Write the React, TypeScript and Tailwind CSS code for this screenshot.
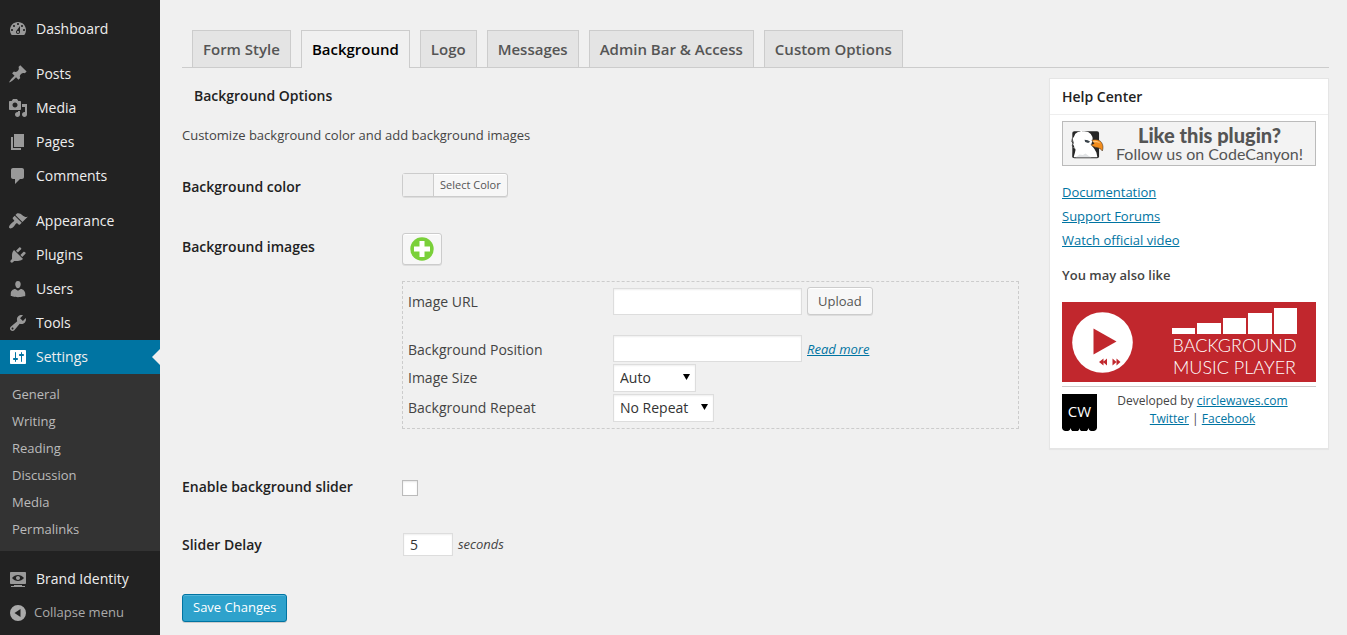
import React from "react";

const menuIcons = {
  dashboard:
    "M3.76 16h12.48c1.1-1.37 1.76-3.11 1.76-5 0-4.42-3.58-8-8-8s-8 3.58-8 8c0 1.89.66 3.63 1.76 5zM10 4c.55 0 1 .45 1 1s-.45 1-1 1-1-.45-1-1 .45-1 1-1zM6 6c.55 0 1 .45 1 1s-.45 1-1 1-1-.45-1-1 .45-1 1-1zm8 0c.55 0 1 .45 1 1s-.45 1-1 1-1-.45-1-1 .45-1 1-1zm-5.37 5.55L12 7v6c0 1.1-.9 2-2 2s-2-.9-2-2c0-.57.24-1.08.63-1.45zM4 10c.55 0 1 .45 1 1s-.45 1-1 1-1-.45-1-1 .45-1 1-1zm12 0c.55 0 1 .45 1 1s-.45 1-1 1-1-.45-1-1 .45-1 1-1zm-5 3c0-.55-.45-1-1-1s-1 .45-1 1 .45 1 1 1 1-.45 1-1z",
  posts:
    "M10.44 3.02l1.82-1.82 6.36 6.35-1.83 1.82c-1.05-.68-2.48-.57-3.41.36l-.75.75c-.92.93-1.04 2.35-.35 3.41l-1.83 1.82-2.41-2.41-2.8 2.79c-.42.42-3.38 2.71-3.8 2.29s1.86-3.39 2.28-3.81l2.79-2.79L4.1 9.36l1.83-1.82c1.05.69 2.48.57 3.4-.36l.75-.75c.93-.92 1.05-2.35.36-3.41z",
  media:
    "M13 11V4c0-.55-.45-1-1-1h-1.67L9 1H5L3.67 3H2c-.55 0-1 .45-1 1v7c0 .55.45 1 1 1h10c.55 0 1-.45 1-1zM7 4.5c1.38 0 2.5 1.12 2.5 2.5S8.38 9.5 7 9.5 4.5 8.38 4.5 7 5.62 4.5 7 4.5zM14 6h5v10.5c0 1.38-1.12 2.5-2.5 2.5S14 17.88 14 16.5s1.12-2.5 2.5-2.5c.17 0 .34.02.5.05V9h-3V6zm-4 8.05V13h2v3.5c0 1.38-1.12 2.5-2.5 2.5S7 17.88 7 16.5 8.12 14 9.5 14c.17 0 .34.02.5.05z",
  pages: "M6 15V2h10v13H6zm-1 1h8v2H3V5h2v11z",
  comments:
    "M5 2h9c1.1 0 2 .9 2 2v7c0 1.1-.9 2-2 2h-2l-5 5v-5H5c-1.1 0-2-.9-2-2V4c0-1.1.9-2 2-2z",
  appearance:
    "M14.48 11.06L7.41 3.99l1.5-1.5c.5-.56 2.3-.47 3.51.32 1.21.8 1.43 1.28 2.91 2.1 1.18.64 2.45 1.26 4.45.85zm-.71.71L6.7 4.7 4.93 6.47c-.39.39-.39 1.02 0 1.41l1.06 1.06c.39.39.39 1.03 0 1.42-.6.6-1.43 1.11-2.21 1.69-.35.26-.7.53-1.01.84C1.43 14.23.4 16.08 1.4 17.07c.99 1 2.84-.03 4.18-1.36.31-.31.58-.66.85-1.02.57-.78 1.08-1.61 1.69-2.21.39-.39 1.02-.39 1.41 0l1.06 1.06c.39.39 1.02.39 1.41 0z",
  plugins:
    "M13.11 4.36L9.87 7.6 8 5.73l3.24-3.24c.35-.34 1.05-.2 1.56.32.52.51.66 1.21.31 1.55zm-8 1.77l.91-1.12 9.01 9.01-1.19.84c-.71.71-2.63 1.16-3.82 1.16H6.14L4.9 17.26c-.59.59-1.54.59-2.12 0-.59-.58-.59-1.53 0-2.12l1.24-1.24v-3.88c0-1.13.4-3.19 1.09-3.89zm7.26 3.97l3.24-3.24c.34-.35 1.04-.21 1.55.31.52.51.66 1.21.31 1.55l-3.24 3.25z",
  users:
    "M10 9.25c-2.27 0-2.73-3.44-2.73-3.44C7 4.02 7.82 2 9.97 2c2.16 0 2.98 2.02 2.71 3.81 0 0-.41 3.44-2.68 3.44zm0 2.57L12.72 10c2.39 0 4.52 2.33 4.52 4.53v2.49s-3.65 1.13-7.24 1.13c-3.65 0-7.24-1.13-7.24-1.13v-2.49c0-2.25 1.94-4.48 4.47-4.48z",
  tools:
    "M16.68 9.77c-1.34 1.34-3.3 1.67-4.95.99l-5.41 6.52c-.99.99-2.59.99-3.58 0s-.99-2.59 0-3.57l6.52-5.42c-.68-1.65-.35-3.61.99-4.95 1.28-1.28 3.12-1.62 4.72-1.06l-2.89 2.89 2.82 2.82 2.86-2.87c.53 1.58.18 3.39-1.08 4.65zM3.81 16.21c.4.39 1.04.39 1.43 0 .4-.4.4-1.04 0-1.43-.39-.4-1.03-.4-1.43 0-.39.39-.39 1.03 0 1.43z",
  settings:
    "M18 16V4c0-.55-.45-1-1-1H3c-.55 0-1 .45-1 1v12c0 .55.45 1 1 1h14c.55 0 1-.45 1-1zM8 11h1c.55 0 1 .45 1 1s-.45 1-1 1H8v1.5c0 .28-.22.5-.5.5s-.5-.22-.5-.5V13H6c-.55 0-1-.45-1-1s.45-1 1-1h1V5.5c0-.28.22-.5.5-.5s.5.22.5.5V11zm5-2h-1c-.55 0-1-.45-1-1s.45-1 1-1h1V5.5c0-.28.22-.5.5-.5s.5.22.5.5V7h1c.55 0 1 .45 1 1s-.45 1-1 1h-1v5.5c0 .28-.22.5-.5.5s-.5-.22-.5-.5V9z",
  brand:
    "M18 14V4c0-.55-.45-1-1-1H3c-.55 0-1 .45-1 1v10c0 .55.45 1 1 1h14c.55 0 1-.45 1-1zm-8-8c2.3 0 4.4 1.14 6 3-1.6 1.86-3.7 3-6 3s-4.4-1.14-6-3c1.6-1.86 3.7-3 6-3zm2 3c0-1.1-.9-2-2-2s-2 .9-2 2 .9 2 2 2 2-.9 2-2zm2 8h3v1H3v-1h3v-1h8v1z",
  collapse: "M10 2a8 8 0 1 0 0 16a8 8 0 1 0 0-16zM12.5 6v8L6.5 10z",
};

type IconName = keyof typeof menuIcons;

function MenuIcon({ name }: { name: IconName }) {
  return (
    <svg viewBox="0 0 20 20" className="size-5 shrink-0" fill="currentColor" fillRule="evenodd" aria-hidden="true">
      <path d={menuIcons[name]} />
    </svg>
  );
}

function MenuItem({ icon, label, active }: { icon: IconName; label: string; active?: boolean }) {
  return (
    <li>
      <a
        href="#"
        className={
          active
            ? "relative flex h-[34px] items-center gap-2 bg-[#0074a2] pl-2 text-sm text-white"
            : "flex h-[34px] items-center gap-2 pl-2 text-sm text-[#999]"
        }
      >
        <MenuIcon name={icon} />
        <span className="text-[#eee]">{label}</span>
        {active && (
          <span className="absolute top-[9px] right-0 border-y-8 border-r-8 border-y-transparent border-r-[#f0f0f0]" />
        )}
      </a>
    </li>
  );
}

function Sidebar() {
  return (
    <nav className="w-40 shrink-0 bg-[#222] pt-3">
      <ul>
        <MenuItem icon="dashboard" label="Dashboard" />
      </ul>
      <ul className="mt-[11px]">
        <MenuItem icon="posts" label="Posts" />
        <MenuItem icon="media" label="Media" />
        <MenuItem icon="pages" label="Pages" />
        <MenuItem icon="comments" label="Comments" />
      </ul>
      <ul className="mt-[11px]">
        <MenuItem icon="appearance" label="Appearance" />
        <MenuItem icon="plugins" label="Plugins" />
        <MenuItem icon="users" label="Users" />
        <MenuItem icon="tools" label="Tools" />
        <MenuItem icon="settings" label="Settings" active />
      </ul>
      <ul className="bg-[#333] pt-[7px] pb-2">
        {["General", "Writing", "Reading", "Discussion", "Media", "Permalinks"].map((label) => (
          <li key={label}>
            <a href="#" className="flex h-[27px] items-center pl-3 text-[13px] text-[#bbb]">
              {label}
            </a>
          </li>
        ))}
      </ul>
      <ul className="mt-[11px]">
        <MenuItem icon="brand" label="Brand Identity" />
      </ul>
      <button type="button" className="flex h-[34px] items-center gap-1.5 pl-2 text-[13px] text-[#aaa]">
        <MenuIcon name="collapse" />
        Collapse menu
      </button>
    </nav>
  );
}

function Tabs() {
  const tabs = ["Form Style", "Background", "Logo", "Messages", "Admin Bar & Access", "Custom Options"];
  return (
    <nav className="flex gap-2.5 border-b border-[#ccc] pl-2.5 text-[15px] font-semibold">
      {tabs.map((tab) => (
        <a
          key={tab}
          href="#"
          className={
            tab === "Background"
              ? "-mb-px flex h-[38px] items-center border border-b-0 border-[#ccc] bg-[#f0f0f0] px-2.5 text-black"
              : "flex h-[37px] items-center border border-b-0 border-[#ccc] bg-[#e4e4e4] px-2.5 text-[#555]"
          }
        >
          {tab}
        </a>
      ))}
    </nav>
  );
}

const field = "border border-[#ddd] bg-white text-[#333] shadow-[inset_0_1px_2px_rgba(0,0,0,0.07)]";
const button =
  "flex items-center rounded-[3px] border border-[#ccc] bg-[#f7f7f7] text-[#555] shadow-[inset_0_1px_0_#fff,0_1px_0_rgba(0,0,0,0.08)]";

function Select({ id, value, width }: { id: string; value: string; width: string }) {
  return (
    <span className="relative flex w-fit">
      <select id={id} className={`${field} ${width} h-7 appearance-none pr-5 pl-1.5 text-sm`}>
        <option>{value}</option>
      </select>
      <svg viewBox="0 0 7 6" className="pointer-events-none absolute top-2.5 right-1.5 h-1.5 w-[7px]" aria-hidden="true">
        <path d="M0 0h7L3.5 6z" fill="#000" />
      </svg>
    </span>
  );
}

function ImageSettings() {
  return (
    <div className="mt-4 border border-dashed border-[#ccc] px-[5px] pt-[5px] pb-1.5 text-sm text-[#444]">
      <div className="grid grid-cols-[205px_1fr] items-center">
        <label htmlFor="image-url" className="pt-0.5">
          Image URL
        </label>
        <div className="flex items-center gap-[5px]">
          <input id="image-url" type="text" className={`${field} h-[27px] w-[189px] px-1.5`} />
          <button type="button" className={`${button} h-7 px-2.5 text-[13px]`}>
            Upload
          </button>
        </div>
        <label htmlFor="bg-position" className="mt-5 pt-0.5">
          Background Position
        </label>
        <div className="mt-5 flex items-center gap-[5px]">
          <input id="bg-position" type="text" className={`${field} h-[27px] w-[189px] px-1.5`} />
          <a href="#" className="pt-0.5 text-[13px] text-[#0074a2] italic underline">
            Read more
          </a>
        </div>
        <label htmlFor="image-size" className="pt-0.5">
          Image Size
        </label>
        <div className="mt-0.5">
          <Select id="image-size" value="Auto" width="w-[83px]" />
        </div>
        <label htmlFor="bg-repeat" className="pt-0.5">
          Background Repeat
        </label>
        <div className="mt-0.5">
          <Select id="bg-repeat" value="No Repeat" width="w-[101px]" />
        </div>
      </div>
    </div>
  );
}

function SettingsForm() {
  const label = "text-sm font-semibold text-[#222]";
  return (
    <form className="min-w-0 flex-1" onSubmit={(event) => event.preventDefault()}>
      <h3 className="mt-2 px-3 py-2.5 text-sm leading-5 font-semibold text-[#222]">Background Options</h3>
      <p className="mt-[9px] text-[13px] leading-5 text-[#444]">Customize background color and add background images</p>

      <div className="mt-7 grid grid-cols-[220px_1fr]">
        <label htmlFor="bg-color" className={`${label} pt-1`}>
          Background color
        </label>
        <button id="bg-color" type="button" className={`${button} h-6 w-fit text-[11px]`}>
          <span className="h-full w-[31px] border-r border-[#ccc] bg-[#f0f0f0]" />
          <span className="px-1.5">Select Color</span>
        </button>
      </div>

      <div className="mt-9 grid grid-cols-[220px_1fr]">
        <label htmlFor="add-image" className={`${label} pt-1`}>
          Background images
        </label>
        <div>
          <button id="add-image" type="button" aria-label="Add image" className={`${button} h-8 w-10 justify-center`}>
            <svg viewBox="0 0 24 24" className="size-6" aria-hidden="true">
              <circle cx="12" cy="12" r="11.7" fill="#7ad03a" />
              <path d="M9.5 4h5v5.500H20v5h-5.500V20h-5v-5.500H4v-5h5.500z" fill="#fff" />
            </svg>
          </button>
          <ImageSettings />
        </div>
      </div>

      <div className="mt-12 grid grid-cols-[220px_1fr] items-center">
        <label htmlFor="slider" className={label}>
          Enable background slider
        </label>
        <input
          id="slider"
          type="checkbox"
          className="mt-0.5 size-4 appearance-none border border-[#bbb] bg-white shadow-[inset_0_1px_2px_rgba(0,0,0,0.1)]"
        />
      </div>

      <div className="mt-9 grid grid-cols-[220px_1fr] items-center">
        <label htmlFor="delay" className={label}>
          Slider Delay
        </label>
        <div className="flex items-center gap-[5px] pl-px">
          <input id="delay" type="text" defaultValue="5" className={`${field} h-[23px] w-[50px] px-1.5 text-sm`} />
          <span className="text-[13px] text-[#444] italic">seconds</span>
        </div>
      </div>

      <button
        type="submit"
        className="mt-[38px] mb-3 flex h-7 items-center rounded-[3px] border border-[#0074a2] bg-[#2ea2cc] px-2.5 text-[13px] text-white shadow-[inset_0_1px_0_rgba(120,200,230,0.5),0_1px_0_rgba(0,0,0,0.15)]"
      >
        Save Changes
      </button>
    </form>
  );
}

function Eagle() {
  return (
    <svg viewBox="92 174 100 90" className="h-[30px] w-[33px] shrink-0" aria-hidden="true">
      <rect x="96" y="180" width="81" height="82" rx="6" fill="#262626" />
      <path
        d="M97 202l4-5 4-9 8-5 8-2-3-5 8 4 6 0 12 3 8 6 5 9 1 12-4 7 2 8 7 9 6 11 3 14H100l4-14 2-9-7-6 3-4-6-8 4-3z"
        fill="#fff"
      />
      <path d="M96 202l-2 10 5 4-3 8 7 8-4 14-1 14" fill="none" stroke="#262626" strokeWidth="2" />
      <path d="M106 259l12-8 10 1 8-4 10 7 8 4z" fill="#e2e4e6" />
      <path d="M133 206l10 2 7 4-6 4-9-3z" fill="#39434a" />
      <path
        d="M155 207c12-4 24-1 30 8 5 8 5 17 2 25-4-5-8-9-15-10-8-1-14-3-20-9l10-3z"
        fill="#f28c1c"
        stroke="#262626"
        strokeWidth="1.5"
        strokeLinejoin="round"
      />
      <path d="M158 210c10-3 19 0 24 8-7-4-15-5-22-4z" fill="#ffc477" />
    </svg>
  );
}

function MusicPlayerBanner() {
  return (
    <a href="#" className="mt-[17px] flex h-20 items-center justify-between bg-[#c1272d] pr-[19px] pl-2.5 text-white">
      <svg viewBox="0 0 61 61" className="size-[61px] shrink-0" aria-hidden="true">
        <circle cx="30.5" cy="30.5" r="30.3" fill="#fff" />
        <path d="M21.5 16.5v26L44.5 29.5z" fill="#c1272d" />
        <path d="M27 50l4.500-3.500v7zM31 50l4-3.500v7zM48.500 50l-4-3.500v7zM44.500 50l-4-3.500v7z" fill="#c1272d" />
      </svg>
      <span className="flex flex-col items-center font-[Lato] text-lg leading-[22px] font-light">
        <svg viewBox="0 -1 125 28" className="h-7 w-[125px]" fill="#fff" aria-hidden="true">
          <path d="M0 21h23v6H0zM25 16h24v11H25zM51 11h23v16H51zM76 6h24v21H76zM102 1h23v26h-23z" />
        </svg>
        <span>BACKGROUND</span>
        <span>MUSIC PLAYER</span>
      </span>
    </a>
  );
}

function HelpCenter() {
  const link = "text-[#0074a2] underline";
  return (
    <aside className="mt-2.5 w-[280px] shrink-0 self-start border border-[#e5e5e5] bg-white pb-[17px] text-[13px] text-[#444] shadow-[0_1px_1px_rgba(0,0,0,0.04)]">
      <h3 className="border-b border-[#eee] px-3 py-2 text-sm leading-[19px] font-semibold text-[#222]">
        Help Center
      </h3>
      <div className="px-3 pt-1.5">
        <a
          href="#"
          className="flex h-[45px] items-center border border-[#bbb] bg-[#f3f3f3] pl-2 font-[Lato] text-[#555]"
        >
          <Eagle />
          <span className="flex flex-1 flex-col items-center text-center">
            <span className="font-['Lato_Black',Lato] text-xl leading-5 font-black">Like this plugin?</span>
            <span className="text-base leading-[18px]">Follow us on CodeCanyon!</span>
          </span>
        </a>
        <ul className="mt-3.5 leading-6">
          {["Documentation", "Support Forums", "Watch official video"].map((text) => (
            <li key={text}>
              <a href="#" className={link}>
                {text}
              </a>
            </li>
          ))}
        </ul>
        <h4 className="mt-[13px] leading-5 font-semibold">You may also like</h4>
        <MusicPlayerBanner />
        <div className="mt-1 flex border-t border-[#ccc] pt-[7px] text-xs leading-[18px]">
          <svg viewBox="0 0 35 37" className="h-[37px] w-[35px] shrink-0" aria-hidden="true">
            <path
              d="M0 0h35v33a4.400 4 0 0 1-8.700 1a4.400 4 0 0 1-8.800 0a4.400 4 0 0 1-8.800 0a4.400 4 0 0 1-8.700-1z"
              fill="#000"
            />
            <text x="17.500" y="23" textAnchor="middle" fill="#fff" className="font-['Open_Sans'] text-[15px]">
              CW
            </text>
          </svg>
          <p className="-mt-0.5 flex-1 pr-2 text-center">
            Developed by{" "}
            <a href="#" className={link}>
              circlewaves.com
            </a>
            <br />
            <a href="#" className={link}>
              Twitter
            </a>{" "}
            |{" "}
            <a href="#" className={link}>
              Facebook
            </a>
          </p>
        </div>
      </div>
    </aside>
  );
}

export default function App() {
  return (
    <div className="flex min-h-screen bg-[#f0f0f0] font-['Open_Sans',sans-serif]">
      <Sidebar />
      <main className="min-w-0 flex-1 pt-[30px] pr-[18px] pl-[22px]">
        <Tabs />
        <div className="flex gap-[30px]">
          <SettingsForm />
          <HelpCenter />
        </div>
      </main>
    </div>
  );
}
